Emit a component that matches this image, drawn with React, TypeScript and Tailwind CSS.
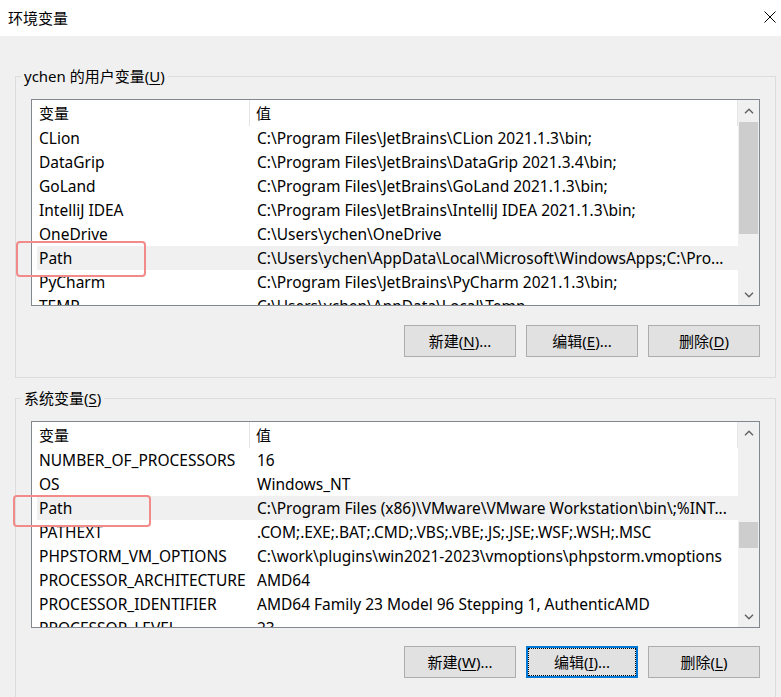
import type { ReactNode } from "react";

type Row = { name: string; value: string };

const userVars: Row[] = [
  { name: "CLion", value: String.raw`C:\Program Files\JetBrains\CLion 2021.1.3\bin;` },
  { name: "DataGrip", value: String.raw`C:\Program Files\JetBrains\DataGrip 2021.3.4\bin;` },
  { name: "GoLand", value: String.raw`C:\Program Files\JetBrains\GoLand 2021.1.3\bin;` },
  { name: "IntelliJ IDEA", value: String.raw`C:\Program Files\JetBrains\IntelliJ IDEA 2021.1.3\bin;` },
  { name: "OneDrive", value: String.raw`C:\Users\ychen\OneDrive` },
  { name: "Path", value: String.raw`C:\Users\ychen\AppData\Local\Microsoft\WindowsApps;C:\Pro...` },
  { name: "PyCharm", value: String.raw`C:\Program Files\JetBrains\PyCharm 2021.1.3\bin;` },
  { name: "TEMP", value: String.raw`C:\Users\ychen\AppData\Local\Temp` },
  { name: "TMP", value: String.raw`C:\Users\ychen\AppData\Local\Temp` },
];

const systemVars: Row[] = [
  { name: "NUMBER_OF_PROCESSORS", value: "16" },
  { name: "OS", value: "Windows_NT" },
  { name: "Path", value: String.raw`C:\Program Files (x86)\VMware\VMware Workstation\bin\;%INT...` },
  { name: "PATHEXT", value: ".COM;.EXE;.BAT;.CMD;.VBS;.VBE;.JS;.JSE;.WSF;.WSH;.MSC" },
  { name: "PHPSTORM_VM_OPTIONS", value: String.raw`C:\work\plugins\win2021-2023\vmoptions\phpstorm.vmoptions` },
  { name: "PROCESSOR_ARCHITECTURE", value: "AMD64" },
  { name: "PROCESSOR_IDENTIFIER", value: "AMD64 Family 23 Model 96 Stepping 1, AuthenticAMD" },
  { name: "PROCESSOR_LEVEL", value: "23" },
  { name: "PROCESSOR_REVISION", value: "6001" },
];

function Chevron({ up }: { up?: boolean }) {
  return (
    <svg width="10" height="6" viewBox="0 0 10 6" className="text-[#606060]">
      <path
        d={up ? "M1 5.2 L5 1.2 L9 5.2" : "M1 0.8 L5 4.8 L9 0.8"}
        fill="none"
        stroke="currentColor"
        strokeWidth="1.4"
      />
    </svg>
  );
}

function Scrollbar({ thumbTop, thumbHeight }: { thumbTop: number; thumbHeight: number }) {
  return (
    <div className="flex w-[21px] shrink-0 flex-col bg-[#f0f0f0]">
      <div className="flex h-[21px] items-center justify-center">
        <Chevron up />
      </div>
      <div className="relative flex-1">
        {/* 스크롤 썸 */}
        <div
          className="absolute left-px right-px bg-[#cdcdcd]"
          style={{ top: thumbTop, height: thumbHeight }}
        />
      </div>
      <div className="flex h-[21px] items-center justify-center">
        <Chevron />
      </div>
    </div>
  );
}

function VarList({
  rows,
  selected,
  thumbTop,
  thumbHeight,
}: {
  rows: Row[];
  selected: string;
  thumbTop: number;
  thumbHeight: number;
}) {
  return (
    <div className="flex h-[207px] overflow-hidden border border-[#828790] bg-white text-[15.5px]">
      <div className="flex min-w-0 flex-1 flex-col overflow-hidden">
        {/* 헤더 */}
        <div className="flex h-[26px] shrink-0 text-[15px] leading-[26px]">
          <div className="w-[218px] shrink-0 border-r border-[#e5e5e5] pl-[7px]">变量</div>
          <div className="flex-1 border-r border-[#e5e5e5] pl-[6px]">值</div>
        </div>
        {rows.map((r) => (
          <div
            key={r.name}
            className={`ml-[5px] flex h-[24px] shrink-0 whitespace-nowrap leading-[24px] ${
              r.name === selected ? "bg-[#f0f0f0]" : ""
            }`}
          >
            <div className="w-[214px] shrink-0 overflow-hidden pl-[2px]">{r.name}</div>
            <div className="flex-1 overflow-hidden pl-[6px]">{r.value}</div>
          </div>
        ))}
      </div>
      <Scrollbar thumbTop={thumbTop} thumbHeight={thumbHeight} />
    </div>
  );
}

function Btn({ children, focused }: { children: ReactNode; focused?: boolean }) {
  return (
    <button
      type="button"
      className={`h-[32px] w-[112px] bg-[#e1e1e1] leading-none ${
        focused
          ? "border-2 border-[#0078d7] outline-1 outline-offset-[-3px] outline-dotted outline-black"
          : "border border-[#adadad]"
      }`}
    >
      {children}
    </button>
  );
}

function Group({
  legend,
  children,
  className,
}: {
  legend: ReactNode;
  children: ReactNode;
  className?: string;
}) {
  return (
    <fieldset className={`ml-[15px] w-[761px] border border-[#dcdcdc] ${className ?? ""}`}>
      <legend className="ml-[5px] px-[3px] leading-[20px]">{legend}</legend>
      {children}
    </fieldset>
  );
}

export default function App() {
  return (
    <div
      className="h-[697px] w-[781px] overflow-hidden bg-[#f0f0f0] text-[15px] text-black"
      style={{ fontFamily: '"Microsoft YaHei UI", "Noto Sans", "Noto Sans CJK SC", sans-serif' }}
    >
      {/* 타이틀 바 */}
      <div className="flex h-[36px] items-center justify-between bg-white pl-[8px] pr-[5px]">
        <span>环境变量</span>
        <svg width="12" height="12" viewBox="0 0 12 12" className="mb-[2px]">
          <path d="M0.5 0.5 L11.5 11.5 M11.5 0.5 L0.5 11.5" stroke="#000" strokeWidth="1" />
        </svg>
      </div>

      <div className="pt-[30px]">
        {/* 사용자 변수 */}
        <Group
          legend={
            <>
              ychen 的用户变量(<span className="underline underline-offset-2">U</span>)
            </>
          }
          className="pb-[20px]"
        >
          <div className="px-[15px] pt-[13px]">
            <div className="relative">
              <VarList rows={userVars} selected="Path" thumbTop={1} thumbHeight={112} />
              <div className="pointer-events-none absolute left-[-15px] top-[142px] h-[36px] w-[130px] rounded-[4px] border-2 border-[#f28a8a]" />
            </div>
            <div className="mt-[19px] flex justify-end gap-[10px]">
              <Btn>
                新建(<span className="underline underline-offset-2">N</span>)...
              </Btn>
              <Btn>
                编辑(<span className="underline underline-offset-2">E</span>)...
              </Btn>
              <Btn>
                删除(<span className="underline underline-offset-2">D</span>)
              </Btn>
            </div>
          </div>
        </Group>

        {/* 시스템 변수 */}
        <Group
          legend={
            <>
              系统变量(<span className="underline underline-offset-2">S</span>)
            </>
          }
          className="mt-[10px] pb-[40px]"
        >
          <div className="px-[15px] pt-[13px]">
            <div className="relative">
              <VarList rows={systemVars} selected="Path" thumbTop={79} thumbHeight={26} />
              <div className="pointer-events-none absolute left-[-18px] top-[74px] h-[32px] w-[138px] rounded-[4px] border-2 border-[#f28a8a]" />
            </div>
            <div className="mt-[18px] flex justify-end gap-[10px]">
              <Btn>
                新建(<span className="underline underline-offset-2">W</span>)...
              </Btn>
              <Btn focused>
                编辑(<span className="underline underline-offset-2">I</span>)...
              </Btn>
              <Btn>
                删除(<span className="underline underline-offset-2">L</span>)
              </Btn>
            </div>
          </div>
        </Group>
      </div>
    </div>
  );
}
